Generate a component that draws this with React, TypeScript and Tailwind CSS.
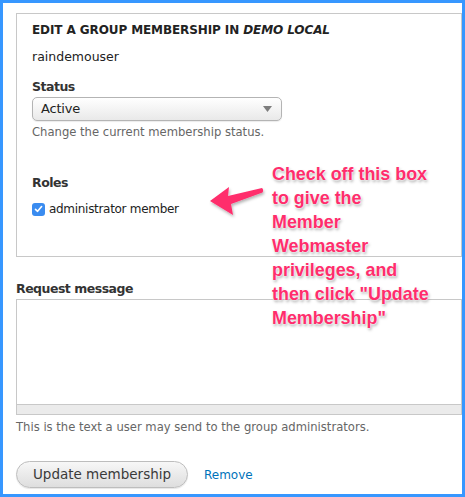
import React from 'react'

const ui = { fontFamily: '"DejaVu Sans", Verdana, sans-serif' }
const note = { fontFamily: '"Liberation Sans", Arial, sans-serif' }

function SelectBox() {
  return (
    <div className="mt-[1px] flex h-[24px] w-[250px] items-center justify-between rounded-[5px] border border-[#b4b4b4] bg-gradient-to-b from-white to-[#e9e9e9] pl-[8px] pr-[9px] shadow-[0_1px_1px_rgba(0,0,0,0.08)]">
      <span className="text-[13px] leading-[18px] tracking-[-0.2px] text-[#222]">Active</span>
      <svg width="9" height="6" viewBox="0 0 9 6">
        <path d="M0 0 H9 L4.5 6 Z" fill="#7d7d7d" />
      </svg>
    </div>
  )
}

function CheckBox() {
  return (
    <span className="flex h-[13px] w-[13px] items-center justify-center rounded-[3px] bg-[#3a8cf0]">
      <svg width="9" height="8" viewBox="0 0 9 8">
        <path d="M1.5 4.3 L3.6 6.3 L7.6 1.5" fill="none" stroke="#fff" strokeWidth="1.6" strokeLinecap="round" strokeLinejoin="round" />
      </svg>
    </span>
  )
}

function Annotation() {
  const lines = ['Check off this box', 'to give the', 'Member', 'Webmaster', 'privileges, and', 'then click "Update', 'Membership"']
  return (
    <>
      <svg className="absolute left-[203px] top-[181px]" width="66" height="42" viewBox="203 184 66 42">
        <defs>
          <filter id="sh" x="-20%" y="-20%" width="150%" height="160%">
            <feDropShadow dx="1" dy="2" stdDeviation="1.5" floodColor="#000" floodOpacity="0.3" />
          </filter>
        </defs>
        <path d="M207 201 L226 187 L225 196 L259 188 Q261 190 259.5 192.5 L228 204 L230 215 Z" fill="#ff2d6c" filter="url(#sh)" />
      </svg>
      <div
        className="absolute left-[269px] top-[159px] text-[17.9px] font-bold leading-[24px] text-[#ff2d6c] [text-shadow:0_0_2px_#fff,0_0_2px_#fff,1px_2px_3px_rgba(0,0,0,0.35)]"
        style={note}
      >
        {lines.map((l, i) => (
          <div key={i} className="whitespace-nowrap">{l}</div>
        ))}
      </div>
    </>
  )
}

export default function App() {
  return (
    <div className="relative h-[497px] w-[465px] overflow-hidden border-[3px] border-[#3797ff] bg-white pl-[13px] pt-[10px] text-[#333]" style={ui}>
      <div className="h-[244px] border border-[#c8c8c8] px-[15px] pt-[8px]">
        <h2 className="text-[12px] font-bold uppercase leading-[16px] tracking-[-0.1px] text-[#222]">
          Edit a group membership in <em>Demo Local</em>
        </h2>
        <p className="mt-[10px] text-[12.5px] leading-[18px] text-[#222]">raindemouser</p>
        <p className="mt-[12px] text-[12.5px] font-bold leading-[18px] tracking-[-0.5px]">Status</p>
        <SelectBox />
        <p className="mt-[3px] text-[11.6px] leading-[16px] text-[#666]">Change the current membership status.</p>
        <p className="mt-[34px] text-[12.5px] font-bold leading-[18px] tracking-[-0.5px]">Roles</p>
        <label className="mt-[8px] flex items-center gap-[4px] text-[12px] leading-[18px] tracking-[-0.3px] text-[#222]">
          <CheckBox />
          administrator member
        </label>
      </div>

      <p className="mt-[23px] text-[12.5px] font-bold leading-[18px] tracking-[-0.5px]">Request message</p>
      <div className="mt-[1px] border border-[#c8c8c8]">
        <div className="h-[104px] bg-white" />
        <div className="h-[10px] border-t border-[#c8c8c8] bg-[#ebebeb]" />
      </div>
      <p className="mt-[4px] text-[11.6px] leading-[16px] text-[#666]">This is the text a user may send to the group administrators.</p>

      <div className="mt-[26px] flex items-center gap-[16px]">
        <button className="h-[27px] w-[172px] rounded-full border border-[#bdbdbd] bg-gradient-to-b from-[#f7f7f7] to-[#dedede] text-[13.5px] text-[#3a3a3a] shadow-[0_1px_1px_rgba(0,0,0,0.1)]">
          Update membership
        </button>
        <a className="text-[12px] text-[#0073ba]">Remove</a>
      </div>

      <Annotation />
    </div>
  )
}
